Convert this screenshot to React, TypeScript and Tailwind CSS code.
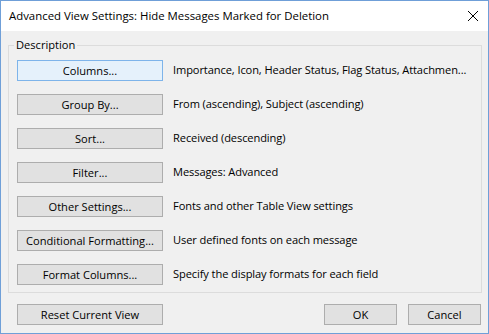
const rows = [
  { label: 'Columns...', desc: 'Importance, Icon, Header Status, Flag Status, Attachmen...', focused: true },
  { label: 'Group By...', desc: 'From (ascending), Subject (ascending)' },
  { label: 'Sort...', desc: 'Received (descending)' },
  { label: 'Filter...', desc: 'Messages: Advanced' },
  { label: 'Other Settings...', desc: 'Fonts and other Table View settings' },
  { label: 'Conditional Formatting...', desc: 'User defined fonts on each message' },
  { label: 'Format Columns...', desc: 'Specify the display formats for each field' },
]

function DlgButton({ children, focused, className = '' }: { children: React.ReactNode; focused?: boolean; className?: string }) {
  return (
    <button
      className={
        'h-[21px] border text-[11.1px] leading-none text-black ' +
        (focused ? 'border-[#7eb4ea] bg-[#e5f1fb] ' : 'border-[#adadad] bg-[#e1e1e1] ') +
        className
      }
    >
      {children}
    </button>
  )
}

export default function App() {
  return (
    <div className="flex h-[334px] w-[489px] flex-col border border-[#6f9fd8] bg-[#f0f0f0] font-['Open_Sans',sans-serif] text-[11.1px] text-black">
      {/* Title bar */}
      <div className="flex h-[30px] items-center justify-between bg-white pl-[8px] pr-[10px]">
        <span className="text-[11.4px]">Advanced View Settings: Hide Messages Marked for Deletion</span>
        <svg viewBox="0 0 10 10" className="size-[10px]" stroke="#000" strokeWidth={1}>
          <path d="M0 0L10 10M10 0L0 10" />
        </svg>
      </div>

      {/* Description group */}
      <fieldset className="ml-[7px] mt-[6px] w-[474px] border border-[#dcdcdc] pb-[7px] pl-[8px] pt-[7px]">
        <legend className="-ml-[3px] px-[2px] leading-[16px]">Description</legend>
        <div className="flex flex-col gap-[13px]">
          {rows.map((r) => (
            <div key={r.label} className="flex items-center gap-[10px]">
              <DlgButton focused={r.focused} className="w-[146px]">
                {r.label}
              </DlgButton>
              <span className="whitespace-nowrap tracking-[-0.1px]">{r.desc}</span>
            </div>
          ))}
        </div>
      </fieldset>

      {/* Bottom buttons */}
      <div className="mt-[11px] flex pl-[16px] pr-[7px]">
        <DlgButton className="w-[146px]">Reset Current View</DlgButton>
        <div className="ml-auto flex gap-[11px]">
          <DlgButton className="w-[73px]">OK</DlgButton>
          <DlgButton className="w-[73px]">Cancel</DlgButton>
        </div>
      </div>
    </div>
  )
}
